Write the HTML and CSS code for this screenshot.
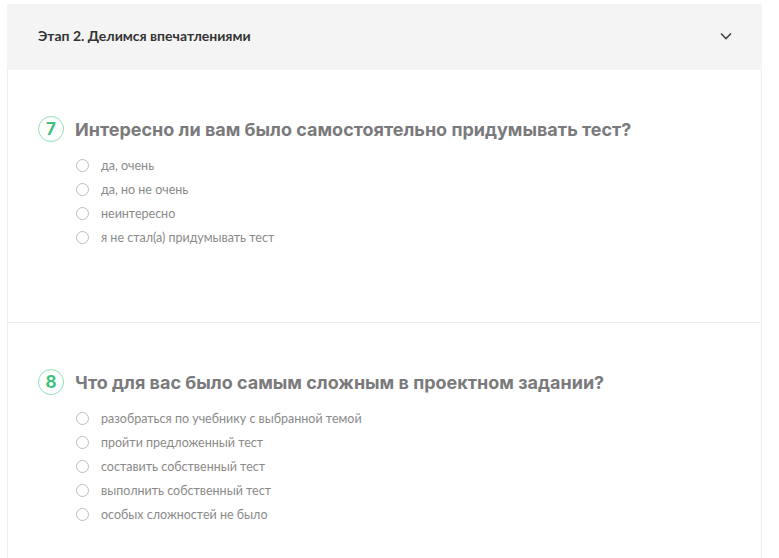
FILE: index.html
```html
<!DOCTYPE html>
<html>
<head>
	<meta charset="utf-8">
	<meta name="viewport" content="width=device-width, initial-scale=1">
	<title>Этап 2</title>
	<link rel="stylesheet" href="styles.css">
</head>
<body>
	<div class="container">

		<!-- Заголовок этапа -->
		<div class="stage-head">
			<span class="stage-title">Этап 2. Делимся впечатлениями</span>
			<svg class="chevron" width="12" height="8" viewBox="0 0 12 8">
				<path d="M1 1.5 L6 6.5 L11 1.5" fill="none" stroke="#444" stroke-width="1.6"/>
			</svg>
		</div>

		<div class="stage-body">

			<!-- Вопрос 7 -->
			<div class="question">
				<div class="q-title">
					<span class="q-num">7</span>
					<span class="q-text">Интересно ли вам было самостоятельно придумывать тест?</span>
				</div>
				<ul class="answers">
					<li><span class="radio"></span>да, очень</li>
					<li><span class="radio"></span>да, но не очень</li>
					<li><span class="radio"></span>неинтересно</li>
					<li><span class="radio"></span>я не стал(а) придумывать тест</li>
				</ul>
			</div>

			<!-- Вопрос 8 -->
			<div class="question">
				<div class="q-title">
					<span class="q-num">8</span>
					<span class="q-text">Что для вас было самым сложным в проектном задании?</span>
				</div>
				<ul class="answers">
					<li><span class="radio"></span>разобраться по учебнику с выбранной темой</li>
					<li><span class="radio"></span>пройти предложенный тест</li>
					<li><span class="radio"></span>составить собственный тест</li>
					<li><span class="radio"></span>выполнить собственный тест</li>
					<li><span class="radio"></span>особых сложностей не было</li>
				</ul>
			</div>
		</div>
	</div>
</body>
</html>
```

FILE: styles.css
```css
* {
	box-sizing: border-box;
}

body {
	margin: 0;
	background-color: #fff;
	font-family: Lato, "Noto Sans", sans-serif;
}

.container {
	margin: 4px 17px 0 7px;
}

/* Stage header */
.stage-head {
	display: flex;
	justify-content: space-between;
	align-items: center;
	height: 66px;
	padding: 0 30px 3px 31px;
	background-color: #f4f4f4;
}

.stage-title {
	font-size: 14px;
	font-weight: 700;
	color: #333;
}

.chevron {
	display: block;
}

/* Questions */
.stage-body {
	border-left: 1px solid #ececec;
	border-right: 1px solid #ececec;
}

.question {
	padding: 46px 30px 62px 30px;
	border-bottom: 1px solid #ececec;
	min-height: 253px;
}

.q-title {
	display: flex;
	align-items: center;
	gap: 11px;
}

.q-num {
	display: flex;
	justify-content: center;
	align-items: center;
	width: 26px;
	height: 26px;
	border: 1.5px solid #93e0b8;
	border-radius: 50%;
	color: #3fc17e;
	font-family: Inter, sans-serif;
	font-size: 17px;
	font-weight: 700;
}

.q-text {
	font-family: Inter, sans-serif;
	font-size: 18px;
	font-weight: 700;
	color: #7a7a7c;
}

.answers {
	list-style: none;
	margin: 11px 0 0 0;
	padding: 0 0 0 38px;
}

.answers li {
	display: flex;
	align-items: center;
	gap: 12px;
	height: 24px;
	font-size: 12.5px;
	color: #8a8a8a;
}

.radio {
	width: 13px;
	height: 13px;
	border: 1px solid #bdbdbd;
	border-radius: 50%;
	background-color: #fff;
}
```
